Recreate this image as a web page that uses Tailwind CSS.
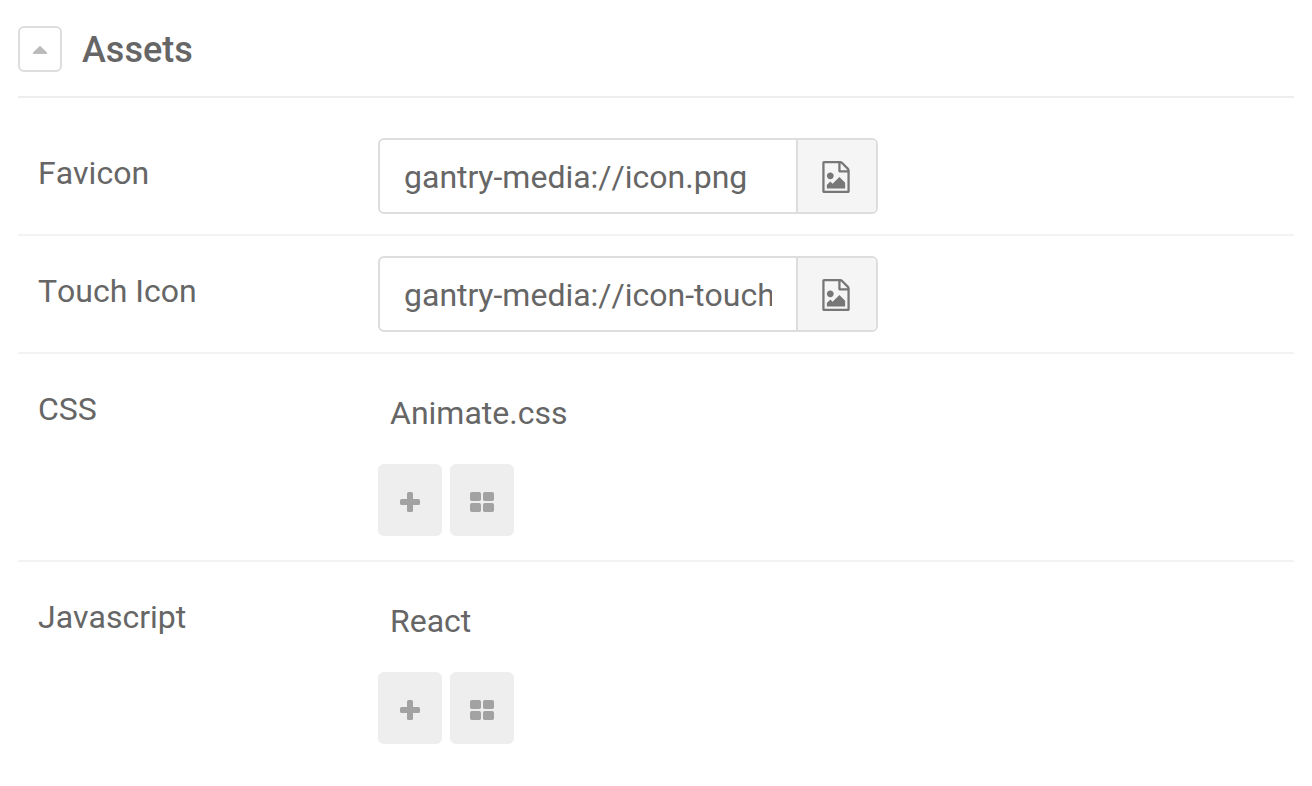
<!DOCTYPE html>
<html lang="en">
<head>
<meta charset="utf-8">
<meta name="viewport" content="width=device-width, initial-scale=1">
<title>Assets</title>
<script src="https://cdn.jsdelivr.net/npm/@tailwindcss/browser@4"></script>
</head>
<body class="bg-white font-['Roboto',sans-serif] text-[32px] leading-12 text-[#666666] [font-kerning:none]">
<svg class="hidden" aria-hidden="true">
  <symbol id="file-image" viewBox="0 0 1536 1792"><path d="M1468 380q28 28 48 76t20 88v1152q0 40-28 68t-68 28h-1344q-40 0-68-28t-28-68v-1600q0-40 28-68t68-28h896q40 0 88 20t76 48zm-444-244v376h376q-10-29-22-41l-313-313q-12-12-41-22zm384 1528v-1024h-416q-40 0-68-28t-28-68v-416h-768v1536h1280zm-128-448v320h-1024v-192l192-192 128 128 384-384zm-832-192q-80 0-136-56t-56-136 56-136 136-56 136 56 56 136-56 136-136 56z"/></symbol>
  <symbol id="plus" viewBox="0 0 20 20"><rect x="7" width="6" height="20" rx="1.5"/><rect y="7" width="20" height="6" rx="1.5"/></symbol>
  <symbol id="grid" viewBox="0 0 24 20"><rect width="11" height="9" rx="1.8"/><rect x="13" width="11" height="9" rx="1.8"/><rect y="11" width="11" height="9" rx="1.8"/><rect x="13" y="11" width="11" height="9" rx="1.8"/></symbol>
</svg>
<main class="px-[18px] pt-[26px]">
  <header class="flex items-center gap-5 border-b-2 border-[#eeeeee] pb-6">
    <button type="button" aria-label="Collapse Assets" class="flex h-[46px] w-11 items-center justify-center rounded-md border-2 border-[#dddddd] pt-[2px]">
      <svg class="h-2 w-4 fill-[#bbbbbb]" viewBox="0 0 16 8" aria-hidden="true"><path d="M7.2.4Q8-.3 8.800.4L15 6.500Q15.600 8 14.200 8H1.800Q.4 8 1 6.500Z"/></svg>
    </button>
    <h2 class="pt-[2px] text-4xl leading-11 font-medium">Assets</h2>
  </header>
  <div class="pt-5">
    <div class="flex items-start border-b-2 border-[#f3f3f3] px-5 py-5">
      <label for="favicon" class="w-[340px] pt-[11px]">Favicon</label>
      <div class="flex h-[76px] w-[500px] overflow-hidden rounded-md border-2 border-[#dddddd]">
        <input id="favicon" type="text" value="gantry-media://icon.png" class="min-w-0 flex-1 px-6 pt-[2px] outline-none">
        <button type="button" aria-label="Pick favicon" class="flex w-20 items-center justify-center border-l-2 border-[#dddddd] bg-[#f5f5f5] pt-[2px] pr-[2px]"><svg class="h-8 w-7 fill-[#777777]" aria-hidden="true"><use href="#file-image"/></svg></button>
      </div>
    </div>
    <div class="flex items-start border-b-2 border-[#f3f3f3] px-5 py-5">
      <label for="touch-icon" class="w-[340px] pt-[11px]">Touch Icon</label>
      <div class="flex h-[76px] w-[500px] overflow-hidden rounded-md border-2 border-[#dddddd]">
        <input id="touch-icon" type="text" value="gantry-media://icon-touch.png" class="min-w-0 flex-1 px-6 pt-[2px] outline-none">
        <button type="button" aria-label="Pick touch icon" class="flex w-20 items-center justify-center border-l-2 border-[#dddddd] bg-[#f5f5f5] pt-[2px] pr-[2px]"><svg class="h-8 w-7 fill-[#777777]" aria-hidden="true"><use href="#file-image"/></svg></button>
      </div>
    </div>
    <div class="flex items-start border-b-2 border-[#f3f3f3] px-5 pt-5 pb-6">
      <h3 class="w-[340px] pt-[11px]">CSS</h3>
      <div class="pt-[15px]">
        <a href="#" class="block px-3">Animate.css</a>
        <div class="mt-[27px] flex gap-2">
          <button type="button" aria-label="Add CSS" class="flex h-18 w-16 items-center justify-center rounded-md bg-[#eeeeee] pt-1"><svg class="size-5 fill-[#a2a2a2]" aria-hidden="true"><use href="#plus"/></svg></button>
          <button type="button" aria-label="Edit all CSS" class="flex h-18 w-16 items-center justify-center rounded-md bg-[#eeeeee] pt-1"><svg class="h-5 w-6 fill-[#a2a2a2]" aria-hidden="true"><use href="#grid"/></svg></button>
        </div>
      </div>
    </div>
    <div class="flex items-start px-5 pt-5 pb-6">
      <h3 class="w-[340px] pt-[11px]">Javascript</h3>
      <div class="pt-[15px]">
        <a href="#" class="block px-3">React</a>
        <div class="mt-[27px] flex gap-2">
          <button type="button" aria-label="Add Javascript" class="flex h-18 w-16 items-center justify-center rounded-md bg-[#eeeeee] pt-1"><svg class="size-5 fill-[#a2a2a2]" aria-hidden="true"><use href="#plus"/></svg></button>
          <button type="button" aria-label="Edit all Javascript" class="flex h-18 w-16 items-center justify-center rounded-md bg-[#eeeeee] pt-1"><svg class="h-5 w-6 fill-[#a2a2a2]" aria-hidden="true"><use href="#grid"/></svg></button>
        </div>
      </div>
    </div>
  </div>
</main>
</body>
</html>
